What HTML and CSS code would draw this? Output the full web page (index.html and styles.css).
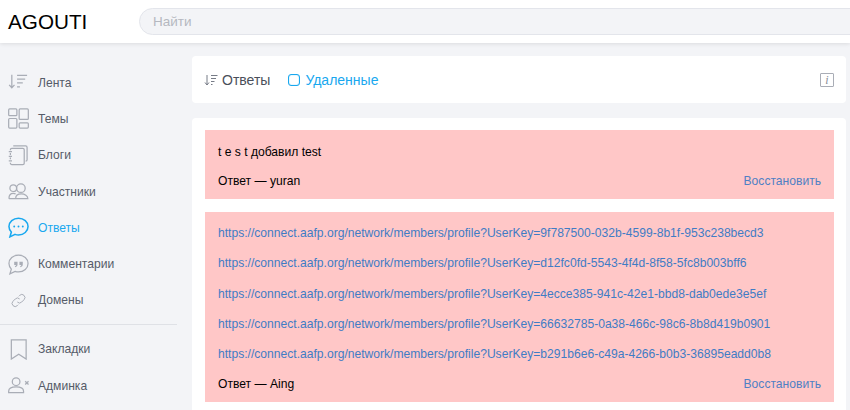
FILE: index.html
```html
<!DOCTYPE html>
<html lang="ru">
<head>
    <meta charset="UTF-8">
    <meta name="viewport" content="width=device-width, initial-scale=1.0">
    <title>Agouti</title>
    <link rel="stylesheet" href="styles.css">
</head>
<body>

    <header class="topbar">
        <div class="logo">AGOUTI</div>
        <input class="search" type="text" placeholder="Найти">
    </header>

    <div class="layout">
        <nav class="sidebar">
            <a class="nav-item" href="#">
                <svg class="nav-icon" viewBox="0 0 22 22"><path d="M4 3v13.500M1.200 13.500 4 16.500l2.800-3M9.500 3.500h10.500M9.500 7.500h8.500M9.500 11.500h6M9.500 15.500h3"/></svg>
                <span>Лента</span>
            </a>
            <a class="nav-item" href="#">
                <svg class="nav-icon" viewBox="0 0 22 22"><rect x=".7" y="1" width="8.600" height="7" rx="1"/><rect x="11.700" y="1" width="9.600" height="11" rx="1"/><rect x=".7" y="11" width="8.600" height="10" rx="1"/><rect x="11.700" y="15.500" width="9.600" height="5.500" rx="1"/></svg>
                <span>Темы</span>
            </a>
            <a class="nav-item" href="#">
                <svg class="nav-icon" viewBox="0 0 22 22"><path d="M5.500 1h13a1.500 1.500 0 0 1 1.500 1.500v13a1.500 1.500 0 0 1-1.500 1.500M2.500 5.500V5A1.500 1.500 0 0 1 4 3.500h11.500A1.500 1.500 0 0 1 17 5v14a1.500 1.500 0 0 1-1.500 1.500H4A1.500 1.500 0 0 1 2.500 19v-.5M2.500 8.500v2M2.500 13v2M.8 7h3.400M.8 11.800h3.400M.8 16.600h3.400"/></svg>
                <span>Блоги</span>
            </a>
            <a class="nav-item" href="#">
                <svg class="nav-icon" viewBox="0 0 22 22"><circle cx="5.500" cy="7.500" r="3.500"/><circle cx="13.500" cy="7.500" r="4.500"/><path d="M1 18.500c0-3.500 1.500-5.500 4.500-5.500 1 0 1.800.2 2.500.7M1 18.500h7M8 18.500c0-3 2.500-5 6-5s6.800 2 6.800 5z"/></svg>
                <span>Участники</span>
            </a>
            <a class="nav-item active" href="#">
                <svg class="nav-icon" viewBox="0 0 22 22"><path d="M11 1.200c5.600 0 10 3.800 10 8.800s-4.400 8.800-10 8.800c-1.300 0-2.500-.2-3.600-.6L2 20.800l1.500-5C2 14.200 1 12.200 1 10c0-5 4.400-8.800 10-8.800z"/><circle class="dot" cx="6.500" cy="10" r="1"/><circle class="dot" cx="11" cy="10" r="1"/><circle class="dot" cx="15.500" cy="10" r="1"/></svg>
                <span>Ответы</span>
            </a>
            <a class="nav-item" href="#">
                <svg class="nav-icon" viewBox="0 0 22 22"><path d="M11 1.200c5.600 0 10 3.800 10 8.800s-4.400 8.800-10 8.800c-1.300 0-2.500-.2-3.600-.6L2 20.800l1.500-5C2 14.200 1 12.200 1 10c0-5 4.400-8.800 10-8.800z"/><path class="quote" d="M6.500 8h3.500v3c0 1.500-1 2.500-2.500 2.800l-.3-1c.8-.2 1.200-.6 1.200-1.300H6.500zM12 8h3.500v3c0 1.500-1 2.500-2.500 2.800l-.3-1c.8-.2 1.200-.6 1.200-1.300H12z"/></svg>
                <span>Комментарии</span>
            </a>
            <a class="nav-item" href="#">
                <svg class="nav-icon" viewBox="0 0 22 22"><g transform="translate(2.200 2.200) scale(.8)"><path d="M9.500 13a4 4 0 0 0 5.700 0l3-3a4 4 0 0 0-5.700-5.700l-1.200 1.200M12.500 9a4 4 0 0 0-5.700 0l-3 3a4 4 0 0 0 5.700 5.700l1.200-1.200"/></g></svg>
                <span>Домены</span>
            </a>
            <div class="nav-divider"></div>
            <a class="nav-item" href="#">
                <svg class="nav-icon" viewBox="0 0 22 22"><path d="M3.500 1h15.500v20l-7.750-5L3.500 21z"/></svg>
                <span>Закладки</span>
            </a>
            <a class="nav-item" href="#">
                <svg class="nav-icon" viewBox="0 0 22 22"><circle cx="8.500" cy="7" r="4"/><path d="M.7 18.500V17c0-3 3.500-4.500 7.800-4.500s7.800 1.500 7.800 4.500v1.500zM18 6.500l3.500 3.500M21.500 6.500 18 10"/></svg>
                <span>Админка</span>
            </a>
        </nav>

        <main class="main">
            <div class="panel tabs">
                <span class="tab">
                    <svg class="tab-icon" viewBox="0 0 14 12"><path d="M3 1v10M1 8.500 3 11l2-2.500M7 1.500h6.500M7 4.500h5M7 7.500h3.500M7 10.500h1.500"/></svg>
                    Ответы
                </span>
                <span class="tab tab-check">
                    <span class="checkbox"></span>
                    Удаленные
                </span>
                <span class="info-icon">i</span>
            </div>

            <div class="panel list">
                <div class="answer">
                    <p class="answer-text">t e s t добавил test</p>
                    <div class="answer-foot">
                        <span>Ответ — yuran</span>
                        <a class="restore" href="#">Восстановить</a>
                    </div>
                </div>
                <div class="answer">
                    <p class="answer-text"><a href="#">https://connect.aafp.org/network/members/profile?UserKey=9f787500-032b-4599-8b1f-953c238becd3</a></p>
                    <p class="answer-text"><a href="#">https://connect.aafp.org/network/members/profile?UserKey=d12fc0fd-5543-4f4d-8f58-5fc8b003bff6</a></p>
                    <p class="answer-text"><a href="#">https://connect.aafp.org/network/members/profile?UserKey=4ecce385-941c-42e1-bbd8-dab0ede3e5ef</a></p>
                    <p class="answer-text"><a href="#">https://connect.aafp.org/network/members/profile?UserKey=66632785-0a38-466c-98c6-8b8d419b0901</a></p>
                    <p class="answer-text"><a href="#">https://connect.aafp.org/network/members/profile?UserKey=b291b6e6-c49a-4266-b0b3-36895eadd0b8</a></p>
                    <div class="answer-foot">
                        <span>Ответ — Aing</span>
                        <a class="restore" href="#">Восстановить</a>
                    </div>
                </div>
            </div>
        </main>
    </div>

</body>
</html>
```

FILE: styles.css
```css
html, body { height: 100%; }
body { margin: 0; background: #f3f4f7; font-family: "Liberation Sans", Arial, sans-serif; color: #000; overflow: hidden; }
a { text-decoration: none; }

.topbar { display: flex; align-items: center; height: 43px; background: #fff; box-shadow: 0 1px 4px rgba(0,0,0,0.1); padding-left: 8px; }
.logo { width: 131px; font-size: 20.700px; line-height: 43px; color: #000; }
.search { flex: 1; height: 27px; box-sizing: border-box; margin-right: -20px; padding: 0 13px; background: #f3f4f7; border: 1px solid #e3e5eb; border-radius: 14px; font-family: inherit; font-size: 13.500px; }
.search::placeholder { color: #b5b8c0; }

.layout { display: flex; }
.sidebar { width: 177px; flex: none; padding-top: 21.500px; }
.nav-item { display: flex; align-items: center; height: 36.300px; padding-left: 8px; font-size: 12.100px; color: #555b68; }
.nav-icon { width: 21px; height: 21px; margin-right: 9px; flex: none; fill: none; stroke: #a9adb6; stroke-width: 1.300; }
.nav-item.active { color: #19a8ef; }
.nav-item.active .nav-icon { stroke: #19a8ef; stroke-width: 1.600; }
.nav-icon .dot { fill: #19a8ef; stroke: none; }
.nav-icon .quote { fill: #a9adb6; stroke: none; }
.nav-divider { height: 1px; background: #dfe1e6; margin: 5.500px 0 6px; }

.main { flex: 1; padding: 13px 4px 0 15px; }
.panel { background: #fff; border-radius: 4px; }
.tabs { display: flex; align-items: center; height: 47px; padding: 0 12px 0 12px; margin-bottom: 15px; font-size: 14px; color: #4a4f5a; }
.tab { display: flex; align-items: center; }
.tab-icon { width: 14px; height: 12px; margin-right: 4px; fill: none; stroke: #777c87; stroke-width: 1; }
.tab-check { margin-left: 18px; color: #19a8ef; }
.checkbox { width: 10px; height: 10px; margin-right: 5px; border: 1px solid #19a8ef; border-radius: 3px; box-shadow: inset 0 0 1px #19a8ef; }
.info-icon { margin-left: auto; width: 12px; height: 12px; border: 1px solid #a9adb6; border-radius: 1px; font-family: "Liberation Serif", serif; font-style: italic; font-size: 12px; line-height: 12px; text-align: center; color: #8a8e98; }

.list { padding: 12.490px 12px 12px 13px; }
.answer { background: #ffc7c7; padding: 6.100px 13px 3.400px; margin-bottom: 12.310px; font-size: 12.100px; }
.answer-text { margin: 0; line-height: 30.400px; }
.answer-text a { color: #3f7cc5; }
.answer-foot { display: flex; justify-content: space-between; line-height: 29px; }
.restore { color: #4f80c4; }
```
